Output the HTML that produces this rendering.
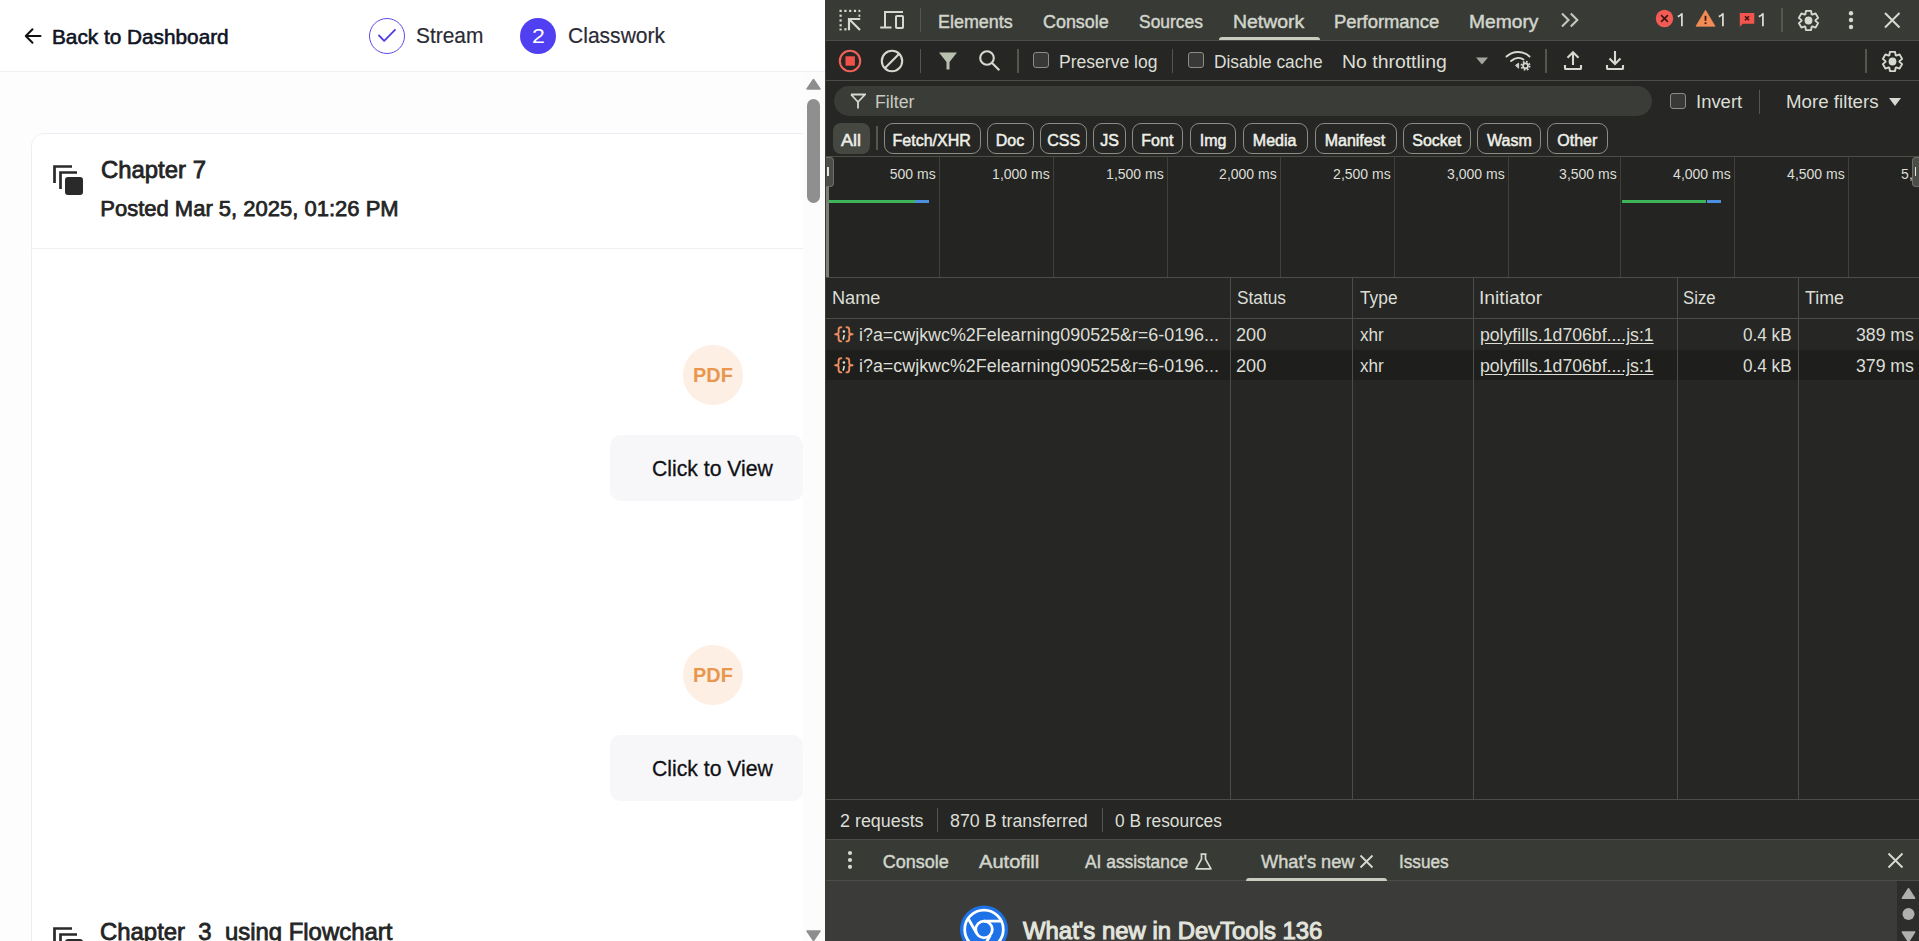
<!DOCTYPE html>
<html><head><meta charset="utf-8"><title>Classwork</title><style>
*{margin:0;padding:0;box-sizing:content-box}
html,body{width:1919px;height:941px;overflow:hidden;background:#fff;font-family:"Liberation Sans",sans-serif}
.t{position:absolute;white-space:nowrap}
.r{position:absolute}
#left{position:absolute;left:0;top:0;width:825px;height:941px;background:#fff;overflow:hidden}
#dt{position:absolute;left:825px;top:0;width:1094px;height:941px;background:#262725;overflow:hidden}
</style></head><body>
<div id="left">
<div class="r" style="left:0px;top:72px;width:825px;height:869px;background:#fdfdfd;"></div>
<div class="r" style="left:0px;top:71px;width:825px;height:1px;background:#efeff1;"></div>
<svg class="r" style="left:22px;top:25px" width="22" height="22" viewBox="0 0 22 22"><path d="M18.5 11H4.5M10.5 4.2L3.8 11l6.7 6.8" fill="none" stroke="#111" stroke-width="2" stroke-linecap="round" stroke-linejoin="round"/></svg>
<div class="t" style="left:52.49px;top:27px;font-size:20.6px;line-height:20.6px;color:#0f1424;-webkit-text-stroke:0.6px #0f1424;transform:scaleX(1.0087);transform-origin:0 0;">Back to Dashboard</div>
<div class="r" style="left:369px;top:18px;width:34px;height:34px;border:1.3px solid #5a4ae8;border-radius:50%"></div>
<svg class="r" style="left:376px;top:26px" width="22" height="20" viewBox="0 0 22 20"><path d="M3 9.5l5.2 5.3L19 3.8" fill="none" stroke="#4f3fe0" stroke-width="1.8" stroke-linecap="round" stroke-linejoin="round"/></svg>
<div class="t" style="left:416.45px;top:25px;font-size:22px;line-height:22px;color:#2a2a34;-webkit-text-stroke:0.2px #2a2a34;transform:scaleX(0.9491);transform-origin:0 0;">Stream</div>
<div class="r" style="left:520px;top:18px;width:36px;height:36px;background:#5140f2;border-radius:50%"></div>
<div class="t" style="left:531.50px;top:25px;font-size:21px;line-height:21px;color:#ffffff;transform:scaleX(1.1042);transform-origin:0 0;">2</div>
<div class="t" style="left:567.79px;top:25px;font-size:22px;line-height:22px;color:#2a2a34;-webkit-text-stroke:0.2px #2a2a34;transform:scaleX(0.9568);transform-origin:0 0;">Classwork</div>
<div class="r" style="left:803px;top:72px;width:22px;height:869px;background:#fcfcfc;"></div>
<svg class="r" style="left:805px;top:77px" width="17" height="14" viewBox="0 0 17 14"><path d="M8.5 2.5L15 12H2z" fill="#8e8e8e" stroke="#8e8e8e" stroke-width="1.5" stroke-linejoin="round"/></svg>
<div class="r" style="left:807px;top:99px;width:13px;height:104px;background:#8f8f8f;border-radius:6.5px;"></div>
<svg class="r" style="left:805px;top:929px" width="17" height="14" viewBox="0 0 17 14"><path d="M8.5 11.5L15 2H2z" fill="#8e8e8e" stroke="#8e8e8e" stroke-width="1.5" stroke-linejoin="round"/></svg>
<div class="r" style="left:0;top:72px;width:803px;height:869px;overflow:hidden">
<div class="r" style="left:30.5px;top:60.5px;width:900px;height:1200px;border:1px solid #ededf6;border-radius:13px;background:#ffffff"></div>
<div class="r" style="left:31px;top:176px;width:800px;height:1px;background:#f0f0f4;"></div>
</div>
<svg class="r" style="left:52.5px;top:164.5px" width="32" height="32" viewBox="0 0 32 32"><path d="M1.5 18V1.5H19" fill="none" stroke="#2a2a2a" stroke-width="2.7"/><path d="M7.5 24V7.5H24" fill="none" stroke="#2a2a2a" stroke-width="2.7"/><rect x="12" y="12" width="18" height="18" rx="3" fill="#2a2a2a"/></svg>
<div class="t" style="left:100.90px;top:158px;font-size:23.8px;line-height:23.8px;color:#242424;-webkit-text-stroke:0.8px #242424;transform:scaleX(1.0039);transform-origin:0 0;">Chapter 7</div>
<div class="t" style="left:100.28px;top:198px;font-size:22px;line-height:22px;color:#242424;-webkit-text-stroke:0.75px #242424;">Posted Mar 5, 2025, 01:26 PM</div>
<div class="r" style="left:683px;top:345px;width:60px;height:60px;background:#fdefe4;border-radius:50%"></div>
<div class="t" style="left:692.67px;top:364px;font-size:21px;line-height:21px;color:#e9964f;font-weight:700;transform:scaleX(0.9474);transform-origin:0 0;">PDF</div>
<div class="r" style="left:610px;top:435px;width:193px;height:65.5px;background:#f7f7f9;border-radius:10px"></div>
<div class="t" style="left:651.59px;top:458px;font-size:22px;line-height:22px;color:#111114;-webkit-text-stroke:0.3px #111114;transform:scaleX(0.9631);transform-origin:0 0;">Click to View</div>
<div class="r" style="left:683px;top:645px;width:60px;height:60px;background:#fdefe4;border-radius:50%"></div>
<div class="t" style="left:692.67px;top:664px;font-size:21px;line-height:21px;color:#e9964f;font-weight:700;transform:scaleX(0.9474);transform-origin:0 0;">PDF</div>
<div class="r" style="left:610px;top:735px;width:193px;height:65.5px;background:#f7f7f9;border-radius:10px"></div>
<div class="t" style="left:651.59px;top:758px;font-size:22px;line-height:22px;color:#111114;-webkit-text-stroke:0.3px #111114;transform:scaleX(0.9631);transform-origin:0 0;">Click to View</div>
<svg class="r" style="left:52.5px;top:926.5px" width="32" height="32" viewBox="0 0 32 32"><path d="M1.5 18V1.5H19" fill="none" stroke="#2a2a2a" stroke-width="2.7"/><path d="M7.5 24V7.5H24" fill="none" stroke="#2a2a2a" stroke-width="2.7"/><rect x="12" y="12" width="18" height="18" rx="3" fill="#2a2a2a"/></svg>
<div class="t" style="left:100.20px;top:920px;font-size:23.8px;line-height:23.8px;color:#242424;-webkit-text-stroke:0.8px #242424;transform:scaleX(1.0045);transform-origin:0 0;">Chapter_3_using Flowchart</div>
</div>
<div class="r" style="left:825px;top:0px;width:1094px;height:941px;background:#262624;"></div>
<div class="r" style="left:825px;top:0px;width:1094px;height:40px;background:#383b35;"></div>
<div class="r" style="left:825px;top:40px;width:1094px;height:1px;background:#4b4d48;"></div>
<svg class="r" style="left:838px;top:8px" width="24" height="24" viewBox="0 0 24 24" fill="#d6d9cf"><rect x="1.5" y="1.8" width="2.2" height="2.2"/><rect x="6.3" y="1.8" width="2.2" height="2.2"/><rect x="11.1" y="1.8" width="2.2" height="2.2"/><rect x="15.9" y="1.8" width="2.2" height="2.2"/><rect x="20.5" y="1.8" width="1.8" height="2.2"/><rect x="1.5" y="6.6" width="2.2" height="2.2"/><rect x="1.5" y="11.4" width="2.2" height="2.2"/><rect x="1.5" y="16.2" width="2.2" height="2.2"/><rect x="1.5" y="20.6" width="2.2" height="1.8"/><rect x="6.3" y="20.2" width="2.2" height="2.2"/><rect x="20.5" y="6.6" width="1.8" height="2.2"/><path d="M11 22.3V11h11.2M11.8 11.8l10.2 10.2" fill="none" stroke="#d6d9cf" stroke-width="2.2"/></svg>
<svg class="r" style="left:879px;top:9px" width="26" height="22" viewBox="0 0 26 22" fill="none" stroke="#d6d9cf" stroke-width="2"><path d="M24 3H6v15.5"/><path d="M1.2 18.5H12.5"/><rect x="17" y="7" width="7" height="12" rx="0.8"/></svg>
<div class="r" style="left:919.5px;top:8px;width:1.6px;height:24px;background:#55574f;"></div>
<div class="t" style="left:937.73px;top:13px;font-size:18px;line-height:18px;color:#d2d5cc;-webkit-text-stroke:0.45px #d2d5cc;transform:scaleX(0.9952);transform-origin:0 0;">Elements</div>
<div class="t" style="left:1042.93px;top:13px;font-size:18px;line-height:18px;color:#d2d5cc;-webkit-text-stroke:0.45px #d2d5cc;transform:scaleX(0.9946);transform-origin:0 0;">Console</div>
<div class="t" style="left:1139.04px;top:13px;font-size:18px;line-height:18px;color:#d2d5cc;-webkit-text-stroke:0.45px #d2d5cc;transform:scaleX(0.9685);transform-origin:0 0;">Sources</div>
<div class="t" style="left:1232.83px;top:13px;font-size:18px;line-height:18px;color:#d2d5cc;-webkit-text-stroke:0.45px #d2d5cc;transform:scaleX(1.0778);transform-origin:0 0;">Network</div>
<div class="t" style="left:1333.70px;top:13px;font-size:18px;line-height:18px;color:#d2d5cc;-webkit-text-stroke:0.45px #d2d5cc;transform:scaleX(1.0213);transform-origin:0 0;">Performance</div>
<div class="t" style="left:1468.64px;top:13px;font-size:18px;line-height:18px;color:#d2d5cc;-webkit-text-stroke:0.45px #d2d5cc;transform:scaleX(1.0680);transform-origin:0 0;">Memory</div>
<div class="r" style="left:1219px;top:37px;width:101px;height:3px;background:#c8cdbf;border-radius:3px 3px 0 0"></div>
<svg class="r" style="left:1559px;top:11px" width="22" height="18" viewBox="0 0 22 18" fill="none" stroke="#c4c8be" stroke-width="2.1"><path d="M3 2.5l6.5 6.5L3 15.5M11.8 2.5l6.5 6.5L11.8 15.5"/></svg>
<svg class="r" style="left:1655px;top:9px" width="19" height="19" viewBox="0 0 19 19"><circle cx="9.5" cy="9.5" r="8.7" fill="#f35b55"/><path d="M6.1 6.1l6.8 6.8M12.9 6.1l-6.8 6.8" stroke="#3b1512" stroke-width="1.5"/></svg>
<svg class="r" style="left:1677.2px;top:12px" width="8" height="16" viewBox="0 0 8 16" fill="none" stroke="#dcded6" stroke-width="1.75"><path d="M4.9 1.2V14.2M5 1.4C4 3 2.6 4 0.8 4.6"/></svg>
<svg class="r" style="left:1695px;top:9px" width="21" height="18" viewBox="0 0 21 18"><path d="M10.5 1.2L20 17.2H1z" fill="#f38c55" stroke="#f38c55" stroke-width="0.8" stroke-linejoin="round"/><path d="M10.5 6.8v5" stroke="#3a1a0c" stroke-width="1.8"/><rect x="9.6" y="13.3" width="1.8" height="1.8" fill="#3a1a0c"/></svg>
<svg class="r" style="left:1718.2px;top:12px" width="8" height="16" viewBox="0 0 8 16" fill="none" stroke="#dcded6" stroke-width="1.75"><path d="M4.9 1.2V14.2M5 1.4C4 3 2.6 4 0.8 4.6"/></svg>
<svg class="r" style="left:1739px;top:12px" width="17" height="16" viewBox="0 0 17 16"><path d="M0.8 1h14.5v10.8H3.8L0.8 14.8z" fill="#f3554e"/><path d="M6 4.2l4 4M10 4.2l-4 4" stroke="#3b1512" stroke-width="1.6"/></svg>
<svg class="r" style="left:1757.8px;top:12px" width="8" height="16" viewBox="0 0 8 16" fill="none" stroke="#dcded6" stroke-width="1.75"><path d="M4.9 1.2V14.2M5 1.4C4 3 2.6 4 0.8 4.6"/></svg>
<div class="r" style="left:1781px;top:8px;width:1.6px;height:24px;background:#55574f;"></div>
<svg class="r" style="left:1797.3px;top:8.6px" width="23" height="23" viewBox="0 0 23 23"><path d="M8.93 1.84 L14.07 1.84 L14.67 5.26 L15.32 5.63 L18.58 4.44 L21.15 8.89 L18.49 11.12 L18.49 11.88 L21.15 14.11 L18.58 18.56 L15.32 17.37 L14.67 17.74 L14.07 21.16 L8.93 21.16 L8.33 17.74 L7.68 17.37 L4.42 18.56 L1.85 14.11 L4.51 11.88 L4.51 11.12 L1.85 8.89 L4.42 4.44 L7.68 5.63 L8.33 5.26Z" fill="none" stroke="#d6d9cf" stroke-width="1.9" stroke-linejoin="round"/><circle cx="11.5" cy="11.5" r="3.9" fill="#d6d9cf"/></svg>
<svg class="r" style="left:1847px;top:10px" width="8" height="20" viewBox="0 0 8 20" fill="#d6d9cf"><circle cx="4" cy="3.2" r="2.2"/><circle cx="4" cy="10" r="2.2"/><circle cx="4" cy="17" r="2.2"/></svg>
<svg class="r" style="left:1883px;top:11px" width="18" height="18" viewBox="0 0 18 18" fill="none" stroke="#d6d9cf" stroke-width="2"><path d="M2 2l14.5 14.5M16.5 2L2 16.5"/></svg>
<div class="r" style="left:825px;top:80px;width:1094px;height:1px;background:#4b4d48;"></div>
<svg class="r" style="left:838px;top:49px" width="24" height="24" viewBox="0 0 24 24"><circle cx="12" cy="12" r="10.2" fill="none" stroke="#f0625a" stroke-width="2.1"/><rect x="7.5" y="7.3" width="9.4" height="9.4" fill="#f0524a"/></svg>
<svg class="r" style="left:880px;top:49px" width="24" height="24" viewBox="0 0 24 24" fill="none" stroke="#d6d9cf" stroke-width="2.1"><circle cx="12" cy="12" r="10.2"/><path d="M19.2 4.8L4.8 19.2"/></svg>
<div class="r" style="left:919.5px;top:49px;width:1.6px;height:24px;background:#55574f;"></div>
<svg class="r" style="left:938px;top:51px" width="20" height="20" viewBox="0 0 20 20"><path d="M1 1.5h18L11.5 11v7.5h-3V11z" fill="#b8c0ae"/></svg>
<svg class="r" style="left:978px;top:49px" width="24" height="24" viewBox="0 0 24 24" fill="none" stroke="#d6d9cf" stroke-width="2.1"><circle cx="9" cy="9" r="6.8"/><path d="M13.8 13.8l7.5 7.5"/></svg>
<div class="r" style="left:1017px;top:49px;width:1.6px;height:24px;background:#55574f;"></div>
<div class="r" style="left:1033.3px;top:52px;width:14px;height:14px;border:1.8px solid #8b8d86;border-radius:3px;background:#393938"></div>
<div class="t" style="left:1059.40px;top:54px;font-size:17.5px;line-height:17.5px;color:#dcded6;transform:scaleX(1.0031);transform-origin:0 0;">Preserve log</div>
<div class="r" style="left:1171.5px;top:49px;width:1.6px;height:24px;background:#55574f;"></div>
<div class="r" style="left:1188.3px;top:52px;width:14px;height:14px;border:1.8px solid #8b8d86;border-radius:3px;background:#393938"></div>
<div class="t" style="left:1214.12px;top:54px;font-size:17.5px;line-height:17.5px;color:#dcded6;transform:scaleX(0.9879);transform-origin:0 0;">Disable cache</div>
<div class="t" style="left:1342.05px;top:54px;font-size:17.5px;line-height:17.5px;color:#dcded6;transform:scaleX(1.1100);transform-origin:0 0;">No throttling</div>
<svg class="r" style="left:1475px;top:57px" width="14" height="8" viewBox="0 0 14 8"><path d="M1 0.5h12L7 7.5z" fill="#a3a59f"/></svg>
<svg class="r" style="left:1504px;top:49px" width="28" height="24" viewBox="0 0 28 24" fill="none" stroke="#d6d9cf" stroke-width="1.9" stroke-linecap="round"><path d="M2.5 7.5C9 1.5 19 1.5 25.5 7.5"/><path d="M7 12C11.5 8.3 16.5 8.3 19.5 10.5"/><path d="M11.8 16.2L14.6 14.2L14.6 18.8Z" fill="#d6d9cf" stroke-width="1"/><circle cx="21.5" cy="16.8" r="4.1" stroke-width="1.8" stroke-dasharray="1.7 1.52" stroke-linecap="butt"/><circle cx="21.5" cy="16.8" r="2.5" stroke-width="1.7"/></svg>
<div class="r" style="left:1545px;top:49px;width:1.6px;height:24px;background:#55574f;"></div>
<svg class="r" style="left:1562px;top:50px" width="22" height="22" viewBox="0 0 22 22" fill="none" stroke="#d6d9cf" stroke-width="2.1"><path d="M11 15V2.5M5.5 7.8L11 2.3l5.5 5.5M3 15v3.2q0 .8.8.8h14.4q.8 0 .8-.8V15"/></svg>
<svg class="r" style="left:1604px;top:50px" width="22" height="22" viewBox="0 0 22 22" fill="none" stroke="#d6d9cf" stroke-width="2.1"><path d="M11 1v13M5.5 8.5L11 14l5.5-5.5M3 15v3.2q0 .8.8.8h14.4q.8 0 .8-.8V15"/></svg>
<div class="r" style="left:1865px;top:49px;width:1.6px;height:24px;background:#55574f;"></div>
<svg class="r" style="left:1880.5px;top:49.5px" width="23" height="23" viewBox="0 0 23 23"><path d="M8.93 1.84 L14.07 1.84 L14.67 5.26 L15.32 5.63 L18.58 4.44 L21.15 8.89 L18.49 11.12 L18.49 11.88 L21.15 14.11 L18.58 18.56 L15.32 17.37 L14.67 17.74 L14.07 21.16 L8.93 21.16 L8.33 17.74 L7.68 17.37 L4.42 18.56 L1.85 14.11 L4.51 11.88 L4.51 11.12 L1.85 8.89 L4.42 4.44 L7.68 5.63 L8.33 5.26Z" fill="none" stroke="#d6d9cf" stroke-width="1.9" stroke-linejoin="round"/><circle cx="11.5" cy="11.5" r="3.9" fill="#d6d9cf"/></svg>
<div class="r" style="left:834px;top:86px;width:818px;height:30px;background:#3a3c37;border-radius:15px"></div>
<svg class="r" style="left:850px;top:93px" width="16" height="16" viewBox="0 0 16 16" fill="none" stroke="#d6d9cf" stroke-width="1.8"><path d="M1 1.5h14L8 9v6.5M1 1.5L8 9"/></svg>
<div class="t" style="left:875.48px;top:94px;font-size:17.5px;line-height:17.5px;color:#c9cbc3;transform:scaleX(1.0134);transform-origin:0 0;">Filter</div>
<div class="r" style="left:1670px;top:92.5px;width:14px;height:14px;border:1.8px solid #8b8d86;border-radius:3px;background:#393938"></div>
<div class="t" style="left:1695.61px;top:94px;font-size:17.5px;line-height:17.5px;color:#dcded6;transform:scaleX(1.0548);transform-origin:0 0;">Invert</div>
<div class="r" style="left:1758.5px;top:90px;width:1.6px;height:24px;background:#55574f;"></div>
<div class="t" style="left:1786.10px;top:94px;font-size:17.5px;line-height:17.5px;color:#dcded6;transform:scaleX(1.0698);transform-origin:0 0;">More filters</div>
<svg class="r" style="left:1888px;top:97px" width="14" height="10" viewBox="0 0 14 10"><path d="M1 1h12L7 9z" fill="#d6d9cf"/></svg>
<div class="r" style="left:832.5px;top:123px;width:37px;height:31px;background:#454841;border-radius:8px"></div>
<div class="t" style="left:841.27px;top:132px;font-size:17px;line-height:17px;color:#eef0e8;-webkit-text-stroke:0.5px #eef0e8;transform:scaleX(1.0604);transform-origin:0 0;">All</div>
<div class="r" style="left:876px;top:126px;width:1.6px;height:24px;background:#55574f;"></div>
<div class="r" style="left:883.5px;top:123px;width:95.0px;height:29px;border:1px solid #8a8c85;border-radius:9px"></div>
<div class="t" style="left:892.60px;top:133px;font-size:16px;line-height:16px;color:#eef0e8;-webkit-text-stroke:0.5px #eef0e8;">Fetch/XHR</div>
<div class="r" style="left:987.2px;top:123px;width:44.5px;height:29px;border:1px solid #8a8c85;border-radius:9px"></div>
<div class="t" style="left:995.75px;top:133px;font-size:16px;line-height:16px;color:#eef0e8;-webkit-text-stroke:0.5px #eef0e8;">Doc</div>
<div class="r" style="left:1040.3px;top:123px;width:44.7px;height:29px;border:1px solid #8a8c85;border-radius:9px"></div>
<div class="t" style="left:1047.20px;top:133px;font-size:16px;line-height:16px;color:#eef0e8;-webkit-text-stroke:0.5px #eef0e8;">CSS</div>
<div class="r" style="left:1093px;top:123px;width:30.5px;height:29px;border:1px solid #8a8c85;border-radius:9px"></div>
<div class="t" style="left:1100.15px;top:133px;font-size:16px;line-height:16px;color:#eef0e8;-webkit-text-stroke:0.5px #eef0e8;">JS</div>
<div class="r" style="left:1132.4px;top:123px;width:49.1px;height:29px;border:1px solid #8a8c85;border-radius:9px"></div>
<div class="t" style="left:1141.35px;top:133px;font-size:16px;line-height:16px;color:#eef0e8;-webkit-text-stroke:0.5px #eef0e8;">Font</div>
<div class="r" style="left:1190.3px;top:123px;width:44.0px;height:29px;border:1px solid #8a8c85;border-radius:9px"></div>
<div class="t" style="left:1199.70px;top:133px;font-size:16px;line-height:16px;color:#eef0e8;-webkit-text-stroke:0.5px #eef0e8;">Img</div>
<div class="r" style="left:1243px;top:123px;width:62.5px;height:29px;border:1px solid #8a8c85;border-radius:9px"></div>
<div class="t" style="left:1252.80px;top:133px;font-size:16px;line-height:16px;color:#eef0e8;-webkit-text-stroke:0.5px #eef0e8;">Media</div>
<div class="r" style="left:1314.5px;top:123px;width:80.0px;height:29px;border:1px solid #8a8c85;border-radius:9px"></div>
<div class="t" style="left:1324.70px;top:133px;font-size:16px;line-height:16px;color:#eef0e8;-webkit-text-stroke:0.5px #eef0e8;">Manifest</div>
<div class="r" style="left:1403px;top:123px;width:66.0px;height:29px;border:1px solid #8a8c85;border-radius:9px"></div>
<div class="t" style="left:1412.25px;top:133px;font-size:16px;line-height:16px;color:#eef0e8;-webkit-text-stroke:0.5px #eef0e8;">Socket</div>
<div class="r" style="left:1477px;top:123px;width:62.0px;height:29px;border:1px solid #8a8c85;border-radius:9px"></div>
<div class="t" style="left:1487.10px;top:133px;font-size:16px;line-height:16px;color:#eef0e8;-webkit-text-stroke:0.5px #eef0e8;">Wasm</div>
<div class="r" style="left:1547px;top:123px;width:59.0px;height:29px;border:1px solid #8a8c85;border-radius:9px"></div>
<div class="t" style="left:1557.25px;top:133px;font-size:16px;line-height:16px;color:#eef0e8;-webkit-text-stroke:0.5px #eef0e8;">Other</div>
<div class="r" style="left:825px;top:156px;width:1094px;height:1px;background:#4b4d48;"></div>
<div class="r" style="left:825px;top:157px;width:1094px;height:120px;background:#242422;"></div>
<div class="r" style="left:939px;top:157px;width:1px;height:120px;background:#3f3f3d;"></div>
<div class="r" style="left:1053px;top:157px;width:1px;height:120px;background:#3f3f3d;"></div>
<div class="r" style="left:1167px;top:157px;width:1px;height:120px;background:#3f3f3d;"></div>
<div class="r" style="left:1280px;top:157px;width:1px;height:120px;background:#3f3f3d;"></div>
<div class="r" style="left:1394px;top:157px;width:1px;height:120px;background:#3f3f3d;"></div>
<div class="r" style="left:1508px;top:157px;width:1px;height:120px;background:#3f3f3d;"></div>
<div class="r" style="left:1620px;top:157px;width:1px;height:120px;background:#3f3f3d;"></div>
<div class="r" style="left:1734px;top:157px;width:1px;height:120px;background:#3f3f3d;"></div>
<div class="r" style="left:1848px;top:157px;width:1px;height:120px;background:#3f3f3d;"></div>
<div class="t" style="left:889.80px;top:167px;font-size:14px;line-height:14px;color:#dcded6;">500 ms</div>
<div class="t" style="left:992.10px;top:167px;font-size:14px;line-height:14px;color:#dcded6;">1,000 ms</div>
<div class="t" style="left:1106.10px;top:167px;font-size:14px;line-height:14px;color:#dcded6;">1,500 ms</div>
<div class="t" style="left:1219.10px;top:167px;font-size:14px;line-height:14px;color:#dcded6;">2,000 ms</div>
<div class="t" style="left:1333.10px;top:167px;font-size:14px;line-height:14px;color:#dcded6;">2,500 ms</div>
<div class="t" style="left:1447.10px;top:167px;font-size:14px;line-height:14px;color:#dcded6;">3,000 ms</div>
<div class="t" style="left:1559.10px;top:167px;font-size:14px;line-height:14px;color:#dcded6;">3,500 ms</div>
<div class="t" style="left:1673.10px;top:167px;font-size:14px;line-height:14px;color:#dcded6;">4,000 ms</div>
<div class="t" style="left:1787.10px;top:167px;font-size:14px;line-height:14px;color:#dcded6;">4,500 ms</div>
<div class="t" style="left:1901.10px;top:167px;font-size:14px;line-height:14px;color:#dcded6;">5,000 ms</div>
<div class="r" style="left:829px;top:199.5px;width:85.5px;height:3.5px;background:#3fb55a;"></div>
<div class="r" style="left:915px;top:199.5px;width:14px;height:3.5px;background:#4c8ee0;"></div>
<div class="r" style="left:1621.5px;top:199.5px;width:84px;height:3.5px;background:#3fb55a;"></div>
<div class="r" style="left:1706.5px;top:199.5px;width:14px;height:3.5px;background:#4c8ee0;"></div>
<div class="r" style="left:825.5px;top:157px;width:3.5px;height:120px;background:#7c7e78;"></div>
<div class="r" style="left:825px;top:157px;width:8px;height:28px;background:#4b4d48;border:1px solid #6d6f69;border-left:none;border-radius:0 4px 4px 0"></div>
<div class="r" style="left:827.3px;top:166.5px;width:1.8px;height:9.5px;background:#e3e5dd;"></div>
<div class="r" style="left:1912px;top:157px;width:8px;height:28px;background:#4b4d48;border:1px solid #6d6f69;border-right:none;border-radius:4px 0 0 4px"></div>
<div class="r" style="left:1914.5px;top:166.5px;width:1.8px;height:9.5px;background:#e3e5dd;"></div>
<div class="r" style="left:825px;top:277px;width:1094px;height:1px;background:#4b4d48;"></div>
<div class="r" style="left:825px;top:349.6px;width:1094px;height:30.8px;background:#1e1e1d;"></div>
<div class="r" style="left:1230px;top:278px;width:1px;height:521px;background:#4b4d48;"></div>
<div class="r" style="left:1352px;top:278px;width:1px;height:521px;background:#4b4d48;"></div>
<div class="r" style="left:1473px;top:278px;width:1px;height:521px;background:#4b4d48;"></div>
<div class="r" style="left:1677px;top:278px;width:1px;height:521px;background:#4b4d48;"></div>
<div class="r" style="left:1798px;top:278px;width:1px;height:521px;background:#4b4d48;"></div>
<div class="r" style="left:825px;top:318px;width:1094px;height:1px;background:#4b4d48;"></div>
<div class="t" style="left:832.35px;top:290px;font-size:17.5px;line-height:17.5px;color:#dcded6;transform:scaleX(1.0382);transform-origin:0 0;">Name</div>
<div class="t" style="left:1236.51px;top:290px;font-size:17.5px;line-height:17.5px;color:#dcded6;transform:scaleX(0.9876);transform-origin:0 0;">Status</div>
<div class="t" style="left:1359.60px;top:290px;font-size:17.5px;line-height:17.5px;color:#dcded6;transform:scaleX(0.9891);transform-origin:0 0;">Type</div>
<div class="t" style="left:1479.14px;top:290px;font-size:17.5px;line-height:17.5px;color:#dcded6;transform:scaleX(1.1009);transform-origin:0 0;">Initiator</div>
<div class="t" style="left:1683.13px;top:290px;font-size:17.5px;line-height:17.5px;color:#dcded6;transform:scaleX(0.9569);transform-origin:0 0;">Size</div>
<div class="t" style="left:1804.89px;top:290px;font-size:17.5px;line-height:17.5px;color:#dcded6;transform:scaleX(1.0162);transform-origin:0 0;">Time</div>
<svg class="r" style="left:833px;top:326.0px" width="22" height="18" viewBox="0 0 22 18" fill="none" stroke="#ee8c5e" stroke-width="1.9" stroke-linecap="round" stroke-linejoin="round"><path d="M8.3 1.2C6.2 1.2 5.6 2 5.6 3.6V6.6C5.6 7.6 5 8.2 2.2 8.3C5 8.4 5.6 9 5.6 10V13C5.6 14.6 6.2 15.4 8.3 15.4"/><path d="M13.5 1.2C15.6 1.2 16.2 2 16.2 3.6V6.6C16.2 7.6 16.8 8.2 19.6 8.3C16.8 8.4 16.2 9 16.2 10V13C16.2 14.6 15.6 15.4 13.5 15.4"/><circle cx="10.9" cy="5.4" r="1.25" fill="#e3e3dc" stroke="none"/><path d="M11.1 9.6L10.3 13" stroke="#e3e3dc" stroke-width="1.6"/></svg>
<div class="t" style="left:859.47px;top:327px;font-size:17.5px;line-height:17.5px;color:#dcded6;transform:scaleX(1.0220);transform-origin:0 0;">i?a=cwjkwc%2Felearning090525&amp;r=6-0196...</div>
<div class="t" style="left:1236.07px;top:327px;font-size:17.5px;line-height:17.5px;color:#dcded6;transform:scaleX(1.0361);transform-origin:0 0;">200</div>
<div class="t" style="left:1359.80px;top:327px;font-size:17.5px;line-height:17.5px;color:#dcded6;transform:scaleX(0.9790);transform-origin:0 0;">xhr</div>
<div class="t" style="left:1479.89px;top:327px;font-size:17.5px;line-height:17.5px;color:#dcded6;transform:scaleX(1.0082);transform-origin:0 0;text-decoration:underline;text-underline-offset:2px;">polyfills.1d706bf....js:1</div>
<div class="t" style="left:1743.31px;top:327px;font-size:17.5px;line-height:17.5px;color:#dcded6;transform:scaleX(0.9792);transform-origin:0 0;">0.4 kB</div>
<div class="t" style="left:1856.29px;top:327px;font-size:17.5px;line-height:17.5px;color:#dcded6;transform:scaleX(1.0089);transform-origin:0 0;">389 ms</div>
<svg class="r" style="left:833px;top:356.8px" width="22" height="18" viewBox="0 0 22 18" fill="none" stroke="#ee8c5e" stroke-width="1.9" stroke-linecap="round" stroke-linejoin="round"><path d="M8.3 1.2C6.2 1.2 5.6 2 5.6 3.6V6.6C5.6 7.6 5 8.2 2.2 8.3C5 8.4 5.6 9 5.6 10V13C5.6 14.6 6.2 15.4 8.3 15.4"/><path d="M13.5 1.2C15.6 1.2 16.2 2 16.2 3.6V6.6C16.2 7.6 16.8 8.2 19.6 8.3C16.8 8.4 16.2 9 16.2 10V13C16.2 14.6 15.6 15.4 13.5 15.4"/><circle cx="10.9" cy="5.4" r="1.25" fill="#e3e3dc" stroke="none"/><path d="M11.1 9.6L10.3 13" stroke="#e3e3dc" stroke-width="1.6"/></svg>
<div class="t" style="left:859.47px;top:358px;font-size:17.5px;line-height:17.5px;color:#dcded6;transform:scaleX(1.0220);transform-origin:0 0;">i?a=cwjkwc%2Felearning090525&amp;r=6-0196...</div>
<div class="t" style="left:1236.07px;top:358px;font-size:17.5px;line-height:17.5px;color:#dcded6;transform:scaleX(1.0361);transform-origin:0 0;">200</div>
<div class="t" style="left:1359.80px;top:358px;font-size:17.5px;line-height:17.5px;color:#dcded6;transform:scaleX(0.9790);transform-origin:0 0;">xhr</div>
<div class="t" style="left:1479.89px;top:358px;font-size:17.5px;line-height:17.5px;color:#dcded6;transform:scaleX(1.0082);transform-origin:0 0;text-decoration:underline;text-underline-offset:2px;">polyfills.1d706bf....js:1</div>
<div class="t" style="left:1743.31px;top:358px;font-size:17.5px;line-height:17.5px;color:#dcded6;transform:scaleX(0.9792);transform-origin:0 0;">0.4 kB</div>
<div class="t" style="left:1856.29px;top:358px;font-size:17.5px;line-height:17.5px;color:#dcded6;transform:scaleX(1.0089);transform-origin:0 0;">379 ms</div>
<div class="r" style="left:825px;top:799px;width:1094px;height:1px;background:#4b4d48;"></div>
<div class="t" style="left:839.68px;top:813px;font-size:17.5px;line-height:17.5px;color:#dcded6;transform:scaleX(1.0224);transform-origin:0 0;">2 requests</div>
<div class="r" style="left:936.5px;top:808px;width:1.6px;height:24px;background:#55574f;"></div>
<div class="t" style="left:950.48px;top:813px;font-size:17.5px;line-height:17.5px;color:#dcded6;transform:scaleX(1.0188);transform-origin:0 0;">870 B transferred</div>
<div class="r" style="left:1101.5px;top:808px;width:1.6px;height:24px;background:#55574f;"></div>
<div class="t" style="left:1115.11px;top:813px;font-size:17.5px;line-height:17.5px;color:#dcded6;transform:scaleX(0.9897);transform-origin:0 0;">0 B resources</div>
<div class="r" style="left:825px;top:839px;width:1094px;height:41px;background:#383b35;"></div>
<div class="r" style="left:825px;top:839px;width:1094px;height:1px;background:#4b4d48;"></div>
<div class="r" style="left:825px;top:880px;width:1094px;height:1px;background:#4b4d48;"></div>
<svg class="r" style="left:846px;top:850px" width="8" height="20" viewBox="0 0 8 20" fill="#d6d9cf"><circle cx="4" cy="3" r="2.1"/><circle cx="4" cy="10" r="2.1"/><circle cx="4" cy="16.8" r="2.1"/></svg>
<div class="t" style="left:882.72px;top:853px;font-size:18px;line-height:18px;color:#d2d5cc;-webkit-text-stroke:0.45px #d2d5cc;">Console</div>
<div class="t" style="left:979.15px;top:853px;font-size:18px;line-height:18px;color:#d2d5cc;-webkit-text-stroke:0.45px #d2d5cc;transform:scaleX(1.1155);transform-origin:0 0;">Autofill</div>
<div class="t" style="left:1084.82px;top:853px;font-size:18px;line-height:18px;color:#d2d5cc;-webkit-text-stroke:0.45px #d2d5cc;transform:scaleX(0.9648);transform-origin:0 0;">AI assistance</div>
<div class="t" style="left:1261.13px;top:853px;font-size:18px;line-height:18px;color:#d2d5cc;-webkit-text-stroke:0.45px #d2d5cc;transform:scaleX(1.0102);transform-origin:0 0;">What's new</div>
<div class="t" style="left:1399.19px;top:853px;font-size:18px;line-height:18px;color:#d2d5cc;-webkit-text-stroke:0.45px #d2d5cc;transform:scaleX(0.9551);transform-origin:0 0;">Issues</div>
<svg class="r" style="left:1194px;top:853px" width="19" height="17" viewBox="0 0 19 17" fill="none" stroke="#d6d9cf" stroke-width="1.7" stroke-linejoin="round"><path d="M6.5 1.2h6M7.5 1.2v5L2 15.8h15L11.5 6.2v-5"/></svg>
<svg class="r" style="left:1359px;top:854px" width="15" height="15" viewBox="0 0 15 15" fill="none" stroke="#d6d9cf" stroke-width="1.8"><path d="M1.5 1.5l12 12M13.5 1.5l-12 12"/></svg>
<div class="r" style="left:1245.5px;top:878px;width:141px;height:3px;background:#c8cdbf;border-radius:3px 3px 0 0"></div>
<svg class="r" style="left:1887px;top:852px" width="17" height="17" viewBox="0 0 17 17" fill="none" stroke="#d6d9cf" stroke-width="1.9"><path d="M1.5 1.5l14 14M15.5 1.5l-14 14"/></svg>
<div class="r" style="left:825px;top:881px;width:1094px;height:60px;background:#3b3b39;"></div>
<div class="r" style="left:1897px;top:881px;width:22px;height:60px;background:#2d2d2c;"></div>
<svg class="r" style="left:1900px;top:886px" width="17" height="60" viewBox="0 0 17 60" fill="#b0b0ae"><path d="M8.5 2.8L14.6 12.2H2.4z" stroke="#b0b0ae" stroke-width="1.6" stroke-linejoin="round"/><circle cx="8.5" cy="28" r="6"/><path d="M8.5 55.5L14.6 46H2.4z" stroke="#b0b0ae" stroke-width="1.6" stroke-linejoin="round"/></svg>
<svg class="r" style="left:959px;top:905px" width="50" height="50" viewBox="0 0 50 50"><circle cx="25" cy="24.5" r="24" fill="#1c72e6"/><circle cx="25" cy="24.5" r="19.3" fill="none" stroke="#fff" stroke-width="2.8"/><circle cx="25" cy="24.5" r="8.3" fill="#1c72e6" stroke="#fff" stroke-width="2.8"/><path d="M25 16.2h17.5M17.8 28.6L9.6 14.2M31.3 30.2L23.8 43.5" stroke="#fff" stroke-width="2.8"/></svg>
<div class="t" style="left:1023.42px;top:920px;font-size:23px;line-height:23px;color:#e3e5dd;-webkit-text-stroke:1.0px #e3e5dd;transform:scaleX(1.0389);transform-origin:0 0;">What's new in DevTools 136</div>
<div class="r" style="left:825px;top:0px;width:1px;height:941px;background:#3a3a38;"></div>
</body></html>
